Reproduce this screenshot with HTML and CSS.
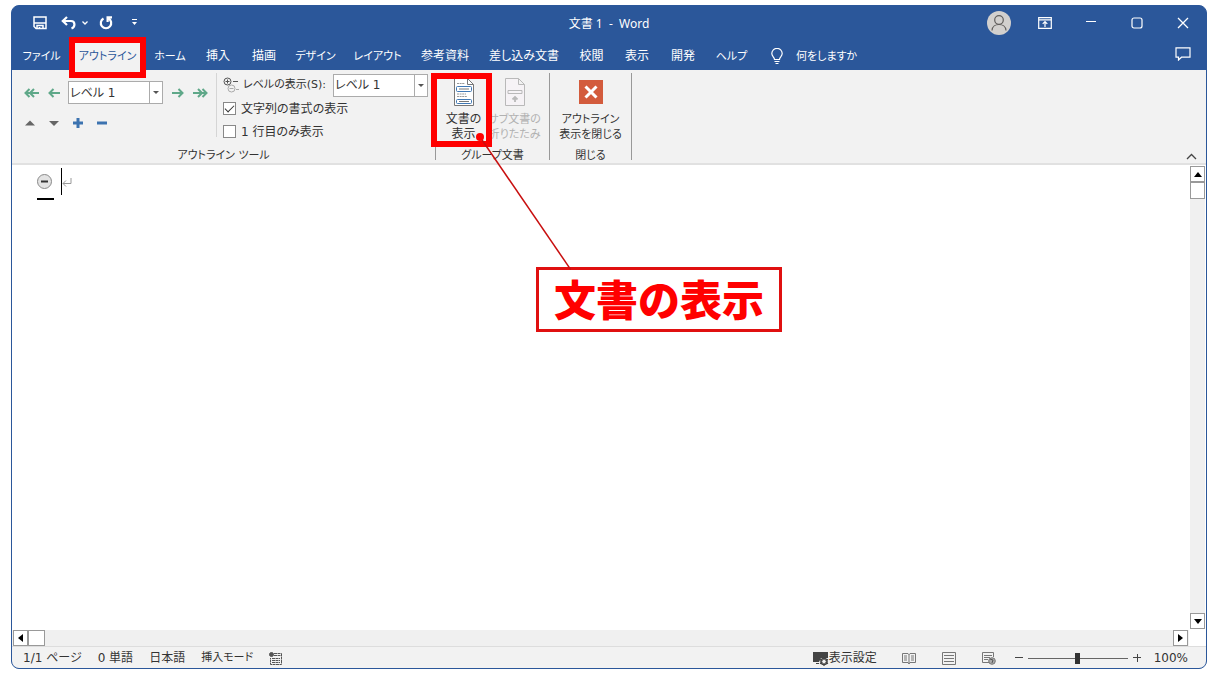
FILE: index.html
```html
<!DOCTYPE html>
<html lang="ja">
<head>
<meta charset="utf-8">
<title>文書 1 - Word</title>
<link rel="stylesheet" href="styles.css">
</head>
<body>
<div class="window">
  <header class="titlebar">
    <div class="quick">
      <button class="plain" aria-label="上書き保存"><svg width="14" height="14" viewBox="0 0 14 14" fill="none" stroke="#fff" stroke-width="1.5"><path d="M1 1h12v11.500H3l-2-2zM1.500 7h11M4 12.500V9.500h6v3M6.500 11v1.500"/></svg></button>
      <button class="plain undo" aria-label="元に戻す"><svg width="16" height="14" viewBox="0 0 16 14" fill="none" stroke="#fff" stroke-width="2.2"><path d="M6 1L1.800 5 6 9M2 5h8c4.500 0 4.500 6 .5 7.500"/></svg><svg width="8" height="6" viewBox="0 0 8 6" fill="none" stroke="#fff" stroke-width="1.300"><path d="M1.500 1.500L4 4l2.500-2.500"/></svg></button>
      <button class="plain" aria-label="繰り返し"><svg width="14" height="14" viewBox="0 0 14 14" fill="none" stroke="#fff" stroke-width="2.2"><path d="M4.500 2.500A5.200 5.200 0 1 0 9.500 2.500M13 1.300H8.600V6"/></svg></button>
      <button class="plain more" aria-label="カスタマイズ"><svg width="7" height="7" viewBox="0 0 7 7" fill="#fff"><path d="M1 0h5v1H1zM1 3h5L3.500 6z"/></svg></button>
    </div>
    <h1 class="title">文書 1&nbsp; -&nbsp; Word</h1>
    <div class="controls">
      <button class="plain" aria-label="アカウント"><svg width="24" height="24" viewBox="0 0 24 24"><circle cx="12" cy="12" r="12" fill="#d2d0ce"/><g fill="none" stroke="#605e5c" stroke-width="1.200"><circle cx="12" cy="9" r="4.300"/><path d="M5 19.500c.5-8 13.500-8 14 0"/></g></svg></button>
      <button class="plain" aria-label="リボンの表示オプション"><svg width="14" height="12" viewBox="0 0 14 12" fill="none" stroke="#fff" stroke-width="1.200"><path d="M.7.7h12.600v10.600H.7zM.7 2.800h12.600M7 10V4.500M4.700 6.800L7 4.500l2.300 2.300"/></svg></button>
      <button class="plain" aria-label="最小化"><svg width="10" height="10" viewBox="0 0 10 10" stroke="#fff"><path d="M0 3.500h10"/></svg></button>
      <button class="plain" aria-label="最大化"><svg width="12" height="12" viewBox="0 0 12 12" fill="none" stroke="#fff" stroke-width="1.200"><rect x="1" y="1" width="10" height="10" rx="2"/></svg></button>
      <button class="plain" aria-label="閉じる"><svg width="12" height="12" viewBox="0 0 12 12" fill="none" stroke="#fff" stroke-width="1.300"><path d="M1 1l10 10M11 1L1 11"/></svg></button>
    </div>
  </header>

  <nav class="tabbar">
    <div class="tabs">
      <button class="tab kana">ファイル</button>
      <button class="tab kana active">アウトライン<span class="mark mark-tab"></span></button>
      <button class="tab kana">ホーム</button>
      <button class="tab">挿入</button>
      <button class="tab">描画</button>
      <button class="tab kana">デザイン</button>
      <button class="tab kana">レイアウト</button>
      <button class="tab">参考資料</button>
      <button class="tab">差し込み文書</button>
      <button class="tab">校閲</button>
      <button class="tab">表示</button>
      <button class="tab">開発</button>
      <button class="tab kana">ヘルプ</button>
    </div>
    <button class="plain tell kana"><svg width="12" height="17" viewBox="0 0 12 17" fill="none" stroke="#fff" stroke-width="1.200"><path d="M3.500 11.500C3.500 9 .8 8.500.8 5.600a5.200 5.200 0 0 1 10.400 0c0 2.900-2.700 3.400-2.700 5.900zM3.500 13.500h5M4.500 15.500h3"/></svg>何をしますか</button>
    <button class="plain comment" aria-label="コメント"><svg width="16" height="14" viewBox="0 0 16 14" fill="none" stroke="#fff" stroke-width="1.200"><path d="M1 .8h14v9.400H6.500L3.500 13v-2.800H1z"/></svg></button>
  </nav>

  <section class="ribbon">
    <div class="group">
      <div class="group-body">
        <div class="levels">
          <div class="level-row">
            <button class="plain" aria-label="見出し 1"><svg width="15" height="10" viewBox="0 0 15 10" fill="none" stroke="#5fa889" stroke-width="2"><path d="M5.500 1l-4 4 4 4M10 1L6 5l4 4M2 5h13"/></svg></button>
            <button class="plain" aria-label="レベル上げ"><svg width="12" height="10" viewBox="0 0 12 10" fill="none" stroke="#5fa889" stroke-width="2"><path d="M5.500 1l-4 4 4 4M2 5h10"/></svg></button>
            <span class="combo"><select aria-label="アウトライン レベル"><option>レベル 1</option></select><span class="drop"></span></span>
            <button class="plain" aria-label="レベル下げ"><svg width="12" height="10" viewBox="0 0 12 10" fill="none" stroke="#5fa889" stroke-width="2"><path d="M6.500 1l4 4-4 4M10 5H0"/></svg></button>
            <button class="plain" aria-label="標準文字列"><svg width="15" height="10" viewBox="0 0 15 10" fill="none" stroke="#5fa889" stroke-width="2"><path d="M9.500 1l4 4-4 4M5 1l4 4-4 4M13 5H0"/></svg></button>
          </div>
          <div class="level-row moves">
            <button class="plain" aria-label="上へ移動"><svg width="10" height="10" viewBox="0 0 10 10" fill="#666"><path d="M0 7.500h10L5 2.500z"/></svg></button>
            <button class="plain" aria-label="下へ移動"><svg width="10" height="10" viewBox="0 0 10 10" fill="#666"><path d="M0 3h10L5 8z"/></svg></button>
            <button class="plain" aria-label="展開"><svg width="10" height="10" viewBox="0 0 10 10" stroke="#3c73b0" stroke-width="3"><path d="M0 5h10M5 0v10"/></svg></button>
            <button class="plain" aria-label="折りたたみ"><svg width="10" height="10" viewBox="0 0 10 10" stroke="#3c73b0" stroke-width="3"><path d="M0 5h10"/></svg></button>
          </div>
        </div>
        <div class="options">
          <div class="option-row">
            <svg width="16" height="16" viewBox="0 0 16 16" fill="none" stroke="#555"><circle cx="4.500" cy="4.500" r="3.500"/><path d="M2.500 4.500h4M4.500 2.500v4M10 4.500h5"/><g stroke="#aaa"><circle cx="8.500" cy="11.500" r="3.500"/><path d="M6.500 11.500h4M13 12.500h3"/></g></svg>
            <label class="kana" for="show-level">レベルの表示(S):</label>
            <span class="combo"><select id="show-level"><option>レベル 1</option></select><span class="drop"></span></span>
          </div>
          <label class="check"><input type="checkbox" checked>文字列の書式の表示</label>
          <label class="check"><input type="checkbox">1 行目のみ表示</label>
        </div>
      </div>
      <div class="group-name kana">アウトライン ツール</div>
    </div>

    <div class="group group-master">
      <div class="group-body">
        <button class="plain big"><svg width="22" height="28" viewBox="0 0 22 28"><path d="M1.500.5h13l6 6v21h-19z" fill="#fff" stroke="#777"/><path d="M14.500.5v6h6" fill="none" stroke="#777"/><path d="M4 5.500h8M4 16h9M4 18.500h10" stroke="#999" stroke-dasharray="2 .6" fill="none"/><g fill="#fff" stroke="#3f78b5"><rect x="3.500" y="8.500" width="15" height="5" rx="1"/><rect x="3.500" y="21.500" width="15" height="4" rx="1"/></g><path d="M6 11h10M6 23.500h10" stroke="#777"/></svg><span>文書の<br>表示</span><span class="mark mark-button"></span></button>
        <button class="plain big kana" disabled><svg width="22" height="28" viewBox="0 0 22 28" fill="none" stroke="#b9b9b9"><path d="M1.500.5h13l6 6v21h-19zM14.500.5v6h6M4 12.500h14v3H4z" fill="#f6f3f6"/><path d="M11 24v-5M8.500 21.500L11 19l2.500 2.500" stroke-width="1.800"/></svg><span>サブ文書の<br>折りたたみ</span></button>
      </div>
      <div class="group-name kana">グループ文書</div>
    </div>

    <div class="group group-close">
      <div class="group-body">
        <button class="plain big kana"><svg width="24" height="28" viewBox="0 0 24 28"><path d="M0 2h24v24H0z" fill="#d35b3c"/><path d="M6.500 8.500l11 11M17.500 8.500l-11 11" stroke="#fff" stroke-width="3"/></svg><span>アウトライン<br>表示を閉じる</span></button>
      </div>
      <div class="group-name kana">閉じる</div>
    </div>
    <button class="plain collapse" aria-label="リボンを折りたたむ"><svg width="11" height="7" viewBox="0 0 11 7" fill="none" stroke="#444" stroke-width="1.300"><path d="M1 6l4.500-4.500L10 6"/></svg></button>
  </section>

  <main class="workspace">
    <div class="page">
      <div class="outline-line">
        <svg width="18" height="32" viewBox="0 0 18 32"><circle cx="8.500" cy="13.500" r="7" fill="#e3e3e3" stroke="#8a8a8a"/><path d="M5 13.500h7" stroke="#333" stroke-width="2"/><path d="M1 31h17" stroke="#000" stroke-width="2"/></svg>
        <span class="caret"></span>
        <svg class="return" width="10" height="9" viewBox="0 0 10 9" fill="none" stroke="#999"><path d="M9 0v5.500H1M4 2.500l-3 3 3 3"/></svg>
      </div>
    </div>
    <div class="vscroll">
      <button class="arrow" aria-label="上へスクロール"><svg width="8" height="5" viewBox="0 0 8 5"><path d="M0 5h8L4 0z"/></svg></button>
      <div class="thumb"></div>
      <button class="arrow end" aria-label="下へスクロール"><svg width="8" height="5" viewBox="0 0 8 5"><path d="M0 0h8L4 5z"/></svg></button>
    </div>
    <div class="hscroll">
      <button class="arrow" aria-label="左へスクロール"><svg width="5" height="8" viewBox="0 0 5 8"><path d="M5 0v8L0 4z"/></svg></button>
      <div class="thumb"></div>
      <button class="arrow end" aria-label="右へスクロール"><svg width="5" height="8" viewBox="0 0 5 8"><path d="M0 0v8l5-4z"/></svg></button>
    </div>
  </main>

  <footer class="status">
    <div class="facts">
      <span>1/1 ページ</span><span>0 単語</span><span>日本語</span><span class="kana">挿入モード</span>
      <svg width="13" height="13" viewBox="0 0 13 13" fill="none" stroke="#555"><circle cx="2.500" cy="2.500" r="2" fill="#555"/><path d="M5 1.500h7.500v11h-11V6M5 3.500h7M3 6.500h8M3 8.500h8M3 10.500h8" stroke-dasharray="3 .5"/></svg>
    </div>
    <div class="views">
      <button class="plain display"><svg width="16" height="15" viewBox="0 0 16 15"><path d="M0 1h15v6H8l-2 4H0zM3 12h3v1H3z" fill="#444"/><circle cx="11" cy="10.500" r="3" fill="none" stroke="#444" stroke-width="1.600"/><path d="M11 6v9M7 8.300l8 4.500M15 8.300l-8 4.500" stroke="#444" stroke-width="1.200"/><circle cx="11" cy="10.500" r="1.700" fill="#f2f2f2"/></svg>表示設定</button>
      <button class="plain view" aria-label="閲覧モード"><svg width="14" height="13" viewBox="0 0 14 13" fill="none" stroke="#777"><path d="M.5 1.500h5.500l1 1 1-1h5.500v9H8l-1 1.500-1-1.500H.5zM7 2v10M2 4h3M2 6h3M2 8h3M9 4h3M9 6h3M9 8h3"/></svg></button>
      <button class="plain view" aria-label="印刷レイアウト"><svg width="14" height="13" viewBox="0 0 14 13" fill="none" stroke="#777"><path d="M.5.5h13v12H.5zM2 3.500h10M2 6.500h10M2 9.500h10"/></svg></button>
      <button class="plain view" aria-label="Web レイアウト"><svg width="14" height="13" viewBox="0 0 14 13" fill="none" stroke="#777"><path d="M7 10.500H.5V.5h11V5M2 3.500h8M2 5.500h6M2 7.500h4"/><circle cx="10" cy="9" r="3.300" fill="#aaa"/><path d="M8 7l3 1-1 3" stroke="#555"/></svg></button>
      <button class="plain zoom-out" aria-label="縮小"><svg width="8" height="8" viewBox="0 0 8 8" stroke="#444"><path d="M0 3.500h8"/></svg></button>
      <input class="zoom" type="range" min="0" max="100" value="50" aria-label="ズーム">
      <button class="plain" aria-label="拡大"><svg width="8" height="8" viewBox="0 0 8 8" stroke="#444"><path d="M0 3.500h8M4.500 0v8"/></svg></button>
      <button class="plain percent">100%</button>
    </div>
  </footer>

  <div class="callout">
    <svg class="leader" width="96" height="138" viewBox="0 0 96 138"><path d="M5 5l91 133" stroke="#c80f0f" stroke-width="1.500"/><circle cx="5" cy="5" r="4" fill="#f00"/></svg>
    <strong class="callout-text">文書の表示</strong>
  </div>
</div>
</body>
</html>
```
FILE: styles.css
```css
* {
  box-sizing: border-box;
}

body {
  margin: 0;
  padding: 5px 11px 7px;
  background: #fff;
  color: #333;
  font: 12px/16px "Noto Sans", "Noto Sans CJK JP", sans-serif;
  font-feature-settings: "palt";
}

button,
input,
select {
  font: inherit;
  font-feature-settings: inherit;
  color: inherit;
  margin: 0;
}

svg {
  display: block;
  flex: none;
}

.plain {
  display: flex;
  align-items: center;
  justify-content: center;
  padding: 0;
  border: 0;
  background: none;
  white-space: nowrap;
}

.kana {
  font-size: 11px;
}

.window {
  position: relative;
  display: flex;
  flex-direction: column;
  min-height: calc(100vh - 12px);
  border: 1px solid #2b579a;
  border-radius: 8px;
  background: #2b579a;
}

/* Title bar */
.titlebar {
  display: grid;
  grid-template-columns: 1fr auto 1fr;
  align-items: center;
  height: 33px;
  color: #fff;
}

.quick {
  display: flex;
  align-items: center;
  gap: 14px;
  padding-left: 21px;
}

.undo {
  gap: 4px;
}

.undo + .plain {
  margin-left: -4px;
}

.more {
  margin-left: 4px;
}

.title {
  margin: 0;
  padding-top: 2px;
  font-size: 12px;
  font-weight: 400;
  white-space: pre;
}

.controls {
  display: flex;
  justify-content: flex-end;
}

.controls .plain,
.comment {
  width: 46px;
  height: 30px;
}

/* Tabs */
.tabbar {
  display: flex;
  align-items: stretch;
  height: 31px;
  padding-left: 1px;
  color: #fff;
}

.tabs {
  display: grid;
  grid-template-columns: 57px 75px 50px 46px 46px 57px 67px 68px 90px 45px 46px 46px 51px;
}

.tab {
  position: relative;
  display: flex;
  align-items: center;
  justify-content: center;
  padding: 3px 0 0;
  border: 0;
  background: none;
  white-space: nowrap;
}

.active {
  background: #f2f2f2;
  color: #2b579a;
}

.tell {
  gap: 13px;
  padding: 3px 0 0 14px;
}

.comment {
  margin-left: auto;
}

.mark {
  position: absolute;
  z-index: 2;
  border: 6px solid #f00;
}

.mark-tab {
  inset: -2px -1px -8px;
}

/* Ribbon */
.ribbon {
  display: flex;
  height: 95px;
  padding-top: 3px;
  border-bottom: 2px solid #e1e1e1;
  background: #f2f2f2;
  font-family: "DejaVu Sans", "Noto Sans CJK JP", sans-serif;
}

.group {
  display: flex;
  flex-direction: column;
  width: 424px;
  border-right: 1px solid #999;
  margin-bottom: 3px;
}

.group-body {
  display: flex;
  flex: 1;
}

.group-name {
  line-height: 8px;
  text-align: center;
}

.group-master {
  width: 114px;
}

.group-close {
  width: 82px;
}

.levels {
  display: flex;
  flex-direction: column;
  gap: 9px;
  width: 205px;
  height: 64px;
  padding: 8px 0 0 12px;
  border-right: 1px solid #d5d5d5;
}

.level-row {
  display: flex;
  align-items: center;
  gap: 9px;
}

.moves {
  gap: 14px;
  height: 20px;
  padding-left: 1px;
}

.level-row .combo {
  margin: 0 0 0 -1px;
}

.combo {
  position: relative;
  display: flex;
  width: 95px;
  height: 23px;
}

.combo select {
  width: 100%;
  padding: 0 20px 0 1px;
  border: 1px solid #ababab;
  border-radius: 0;
  appearance: none;
  background: #fff;
}

.drop {
  position: absolute;
  inset: 0 0 0 auto;
  display: grid;
  place-items: center;
  width: 14px;
  border: 1px solid #ababab;
  pointer-events: none;
}

.drop::after {
  content: "";
  border: 3px solid transparent;
  border-top-color: #555;
  border-bottom: 0;
}

.options {
  display: flex;
  flex-direction: column;
  padding-left: 6px;
}

.option-row {
  display: flex;
  align-items: center;
  gap: 4px;
  width: 205px;
  height: 24px;
  white-space: nowrap;
}

.option-row label {
  width: 86px;
}

.option-row .combo {
  flex: none;
}

.check {
  display: flex;
  align-items: center;
  gap: 5px;
  height: 23px;
}

.check input {
  display: grid;
  place-items: center;
  width: 13px;
  height: 13px;
  border: 1px solid #888;
  appearance: none;
  background: #fff;
}

.check input:checked::after {
  content: "";
  width: 8px;
  height: 4px;
  border: solid #333;
  border-width: 0 0 1px 1px;
  rotate: -45deg;
  translate: 0 -1px;
}

.group-master .group-body {
  padding-left: 2px;
}

.big {
  position: relative;
  flex-direction: column;
  justify-content: flex-start;
  gap: 6px;
  width: 51px;
  padding-top: 5px;
  line-height: 15px;
}

.big:disabled {
  color: #b1b1b1;
}

.group-close .big {
  width: 100%;
}

.mark-button {
  inset: 0 -3px 5px -7px;
}

.collapse {
  align-self: flex-end;
  margin: 0 9px 0 auto;
  height: 13px;
}

/* Document area */
.workspace {
  display: grid;
  flex: 1;
  grid-template: 1fr 16px / 1fr 17px;
  background: #fff;
}

.page {
  padding: 3px 0 0 24px;
}

.outline-line {
  display: flex;
  align-items: flex-start;
}

.caret {
  width: 1px;
  height: 27px;
  margin-left: 7px;
  background: #000;
}

.return {
  margin-top: 10px;
}

.vscroll {
  display: flex;
  flex-direction: column;
  margin: 1px;
  background: #f0f0f0;
}

.hscroll {
  display: flex;
  padding: 0 1px;
  background: #f0f0f0;
}

.arrow,
.thumb {
  display: grid;
  place-items: center;
  width: 15px;
  height: 16px;
  padding: 0;
  border: 1px solid #999;
  background: #fff;
}

.hscroll .thumb {
  width: 17px;
}

.vscroll .thumb {
  height: 17px;
}

.vscroll .end {
  margin-top: auto;
}

.hscroll .end {
  margin-left: auto;
}

/* Status bar */
.status {
  display: flex;
  align-items: center;
  justify-content: space-between;
  height: 22px;
  padding: 1px 18px 0 11px;
  border-top: 1px solid #ddd;
  border-radius: 0 0 7px 7px;
  background: #f2f2f2;
  font-family: "DejaVu Sans", "Noto Sans CJK JP", sans-serif;
}

.facts {
  display: flex;
  align-items: center;
  gap: 16px;
}

.views {
  display: flex;
  align-items: center;
}

.display {
  margin-right: 12px;
}

.view {
  width: 40px;
}

.zoom-out {
  margin-left: 6px;
}

.zoom {
  width: 100px;
  height: 12px;
  margin: 0 5px;
  appearance: none;
  background: linear-gradient(#666, #666) center / 100% 1px no-repeat;
}

.zoom::-webkit-slider-thumb {
  appearance: none;
  width: 5px;
  height: 11px;
  background: #333;
}

.percent {
  margin-left: 13px;
}

/* Annotation */
.callout {
  position: absolute;
  z-index: 3;
  top: 261px;
  left: 524px;
  padding: 0 15px;
  border: 3px solid #e01010;
  background: #fff;
}

.callout-text {
  color: #f00;
  font-size: 42px;
  font-weight: 900;
  line-height: 59px;
  font-feature-settings: normal;
}

.leader {
  position: absolute;
  right: 100%;
  bottom: 100%;
  margin: 0 -32px 0 0;
}
```
